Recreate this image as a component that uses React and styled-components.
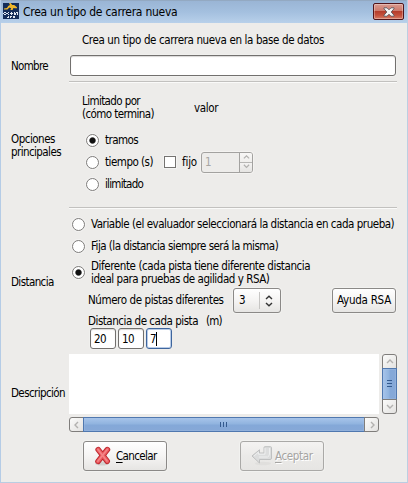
import React from "react";
import styled, { createGlobalStyle, css } from "styled-components";

const GlobalStyle = createGlobalStyle`
  body { margin: 0; }
  * { box-sizing: border-box; }
  svg { display: block; flex: none; }
`;

const Dialog = styled.main`
  width: 408px;
  height: 483px;
  display: flex;
  flex-direction: column;
  background: #edecea;
  border: solid #b5cce6;
  border-width: 0 1px 1px;
  border-right-color: #bccfe2;
  border-bottom-color: #b9cde2;
  font: 11.5px/13px "DejaVu Sans Condensed", "DejaVu Sans", sans-serif;
  color: #000;
  overflow: hidden;
`;

const TitleBar = styled.header`
  height: 23px;
  margin: 0 -1px;
  flex: none;
  display: flex;
  align-items: flex-start;
  background: linear-gradient(#9ab5d5, #a4c0df 50%, #b8d0ea);
  border-top: 1px solid #93a9c2;
  border-radius: 2px 2px 0 0;
  padding: 2px 3px 0;
`;

const Title = styled.h1`
  flex: 1;
  margin: 2px 0 0 4px;
  font-size: 12px;
  line-height: 14px;
  font-weight: 400;
`;

const CloseButton = styled.button`
  width: 31px;
  height: 17px;
  margin-right: 1px;
  padding: 0;
  display: grid;
  place-items: center;
  border: 1px solid #51151a;
  border-radius: 2px;
  background: linear-gradient(#d99b90, #cd7a6c 45%, #b53e2d 50%, #c4503c 75%, #d67c65);
  box-shadow: inset 0 0 0 1px #ffffff50;
`;

const Text = styled.span`
  display: block;
  flex: none;
  white-space: pre;
  letter-spacing: ${(p) => p.$track ?? -0.5}px;
`;

const Section = styled.section`
  flex: none;
  height: ${(p) => p.$height}px;
  display: grid;
  grid-template-columns: 58px 328px;
  padding-left: 10px;
`;

const SideLabel = styled.div`
  padding-top: ${(p) => p.$top}px;
`;

const Panel = styled.div`
  display: flex;
  flex-direction: column;
`;

const Row = styled.div`
  display: flex;
  flex: none;
  align-items: center;
  height: ${(p) => p.$height}px;
  padding-top: ${(p) => p.$top ?? 0}px;
  padding-left: ${(p) => p.$indent ?? 0}px;
  gap: ${(p) => p.$gap ?? 0}px;
`;

const Column = styled.div`
  flex: none;
  width: ${(p) => p.$width}px;
`;

const Rule = styled.hr`
  width: 328px;
  height: 2px;
  flex: none;
  margin: 0 0 0 68px;
  border: 0;
  background: linear-gradient(#c2c1bf 50%, #fafaf9 50%);
`;

const Radio = styled.span`
  width: 13px;
  height: 13px;
  flex: none;
  border: 1px solid #7e7c7a;
  border-radius: 50%;
  background: ${(p) =>
    p.$on ? "radial-gradient(circle at 50% 50%, #111 0 2.6px, #fff 3.7px)" : "#fff"};
  box-shadow: 0 0 0 1px #fafaf980;
`;

const Check = styled.span`
  width: 12px;
  height: 12px;
  flex: none;
  border: 1px solid #757371;
  background: #fff;
  box-shadow: 0 0 0 1px #fafaf980;
`;

const field = css`
  border: 1px solid #72706e;
  border-radius: 3px;
  background: #fff;
  box-shadow: inset 0 1px 1px #d9d8d6, 0 0 0 1px #f4f3f180;
`;

const NameField = styled.div`
  ${field}
  width: 326px;
  height: 21px;
  margin-left: 1px;
`;

const NumberField = styled.div`
  ${field}
  width: 26px;
  height: 21px;
  display: flex;
  align-items: center;
  padding: 1px 0 0 3px;
  ${(p) => p.$focused && css`border-color: #3e659d; box-shadow: inset 0 0 0 1px #b8cce8;`}
`;

const Caret = styled.i`
  width: 1px;
  height: 14px;
  background: #000;
`;

const Spin = styled.div`
  width: 52px;
  height: 21px;
  display: grid;
  grid-template-columns: 1fr 12px;
  border: 1px solid #a3a2a0;
  border-radius: 3px;
  color: #a7a6a4;
  box-shadow: 0 0 0 1px #f8f7f6a0;
`;

const SpinValue = styled.div`
  border-right: 1px solid #a3a2a0;
  padding: 3px 0 0 3px;
`;

const SpinArrows = styled.div`
  display: grid;
  grid-template-rows: 1fr 1fr;
  place-items: center;
  border-radius: 0 2px 2px 0;
  background: linear-gradient(#f8f7f6, #f0efed 47%, #b7b6b4 48%, #b7b6b4 52%, #f4f3f2 53%, #e5e4e2);
`;

const raised = css`
  border: 1px solid #8b8987;
  border-radius: 3px;
  background: linear-gradient(#fff, #f5f4f3 50%, #e6e5e3);
  box-shadow: 0 0 0 1px #f8f7f680;
`;

const Combo = styled.div`
  ${raised}
  width: 48px;
  height: 25px;
  margin-right: 51px;
  display: flex;
  align-items: center;
  padding-left: 5px;
`;

const ComboDivider = styled.i`
  width: 1px;
  height: 17px;
  margin: 0 5px 0 14px;
  background: #c6c5c3;
`;

const Button = styled.button`
  ${raised}
  width: ${(p) => p.$width}px;
  height: ${(p) => p.$height}px;
  display: flex;
  align-items: center;
  justify-content: ${(p) => (p.$icon ? "flex-start" : "center")};
  padding: 0 0 0 ${(p) => (p.$icon ? 10 : 0)}px;
  gap: ${(p) => (p.$icon ? 4 : 0)}px;
  font: inherit;
  color: #000;
  ${(p) =>
    p.disabled &&
    css`
      gap: 2px;
      color: #a5a4a2;
      text-shadow: 1px 1px #fff;
      border-color: #aaa9a7;
      background: linear-gradient(#f4f3f2, #ebeae8 50%, #e6e5e3);
    `}
`;

const Mnemonic = styled.span`
  text-decoration: underline;
  text-underline-offset: 2px;
  text-decoration-thickness: 1px;
`;

const Description = styled.div`
  display: grid;
  grid-template: 60px 15px / 310px 15px;
  gap: 3px;
`;

const TextArea = styled.div`
  background: #fff;
`;

const ScrollBar = styled.div`
  display: grid;
  ${(p) =>
    p.$vertical
      ? css`grid-template: 15px 1fr 15px / 15px;`
      : css`grid-template: 15px / 15px 1fr 15px;`}
`;

const ScrollStep = styled.div`
  display: grid;
  place-items: center;
  border: 1px solid #7f7d7b;
  border-radius: ${(p) => p.$radius};
  background: linear-gradient(135deg, #fbfbfa, #e3e2e0);
`;

const Thumb = styled.div`
  display: grid;
  place-items: center;
  border: 1px solid #5078af;
  margin: ${(p) => (p.$vertical ? "-1px 0" : "0 -1px")};
  background: linear-gradient(${(p) => (p.$vertical ? "90deg" : "180deg")}, #a7c4ea, #91b4df 45%, #84a8d8 55%, #86a8d7);
  box-shadow: inset 0 0 0 1px #a8c3e750;
`;

const Actions = styled.footer`
  display: flex;
  gap: 73px;
  padding: 8px 0 0 82px;
`;

const arrowPaths = {
  up: "M1 5 L4 2 L7 5",
  down: "M1 2 L4 5 L7 2",
  left: "M5 1 L2 4 L5 7",
  right: "M3 1 L6 4 L3 7",
};

function Arrow({ dir, size = 8, color = "#b2b1af", weight = 1.4 }) {
  return (
    <svg width={size} height={size} viewBox="0 0 8 8" fill="none">
      <path d={arrowPaths[dir]} stroke={color} strokeWidth={weight} />
    </svg>
  );
}

function Grip({ vertical }) {
  return (
    <svg width="8" height="8" stroke="#345a8e" strokeWidth="1">
      <path d={vertical ? "M1 .5H6M1 3.5H6M1 6.5H6" : "M.5 1V6M3.5 1V6M6.5 1V6"} />
    </svg>
  );
}

function AppIcon() {
  return (
    <svg width="16" height="16" viewBox="0 0 16 16">
      <path fill="#142d58" d="M0 0h16v16H0z" />
      <path fill="#efb72b" d="M6 0h1.6l1.7 2h1.9L14 4.2V5.2h-2L10.4 5 9.6 7H7.4l.8-1.8L6.4 4.6 4.4 6.4H1v-.8l3-.6 1.2-2L7 2z" />
      <path
        fill="none"
        stroke="#e2e9f1"
        d="M1 9.5h2m2 0h1m2 0h1m2 0h1m1 0h2M0 10.5h1m2 0h2m2 0h3m1 0h2m1 0h1M1 11.5h2m2 0h1m2 0h1m2 0h2m1 0h1M5 13.5h1m1 0h2m1 0h2M4 14.5h2m1 0h1m2 0h2"
      />
    </svg>
  );
}

function CloseIcon() {
  return (
    <svg width="12" height="10" viewBox="0 0 12 10">
      <path
        d="M1 .8h3l2 2 2-2h3v1L8.2 5 11 8.2v1H8l-2-2-2 2H1v-1L3.8 5 1 1.8z"
        fill="#f4f4f4"
        stroke="#5d565c"
        strokeWidth=".9"
      />
    </svg>
  );
}

function CancelIcon() {
  return (
    <svg width="18" height="20" viewBox="0 0 18 20" strokeLinecap="round" fill="none">
      <ellipse cx="8" cy="17.5" rx="7" ry="2" fill="#d2d1cf" />
      <path d="M4.2 3.6L13.2 15.2M13.4 3.6L4 15.4" stroke="#bc262d" strokeWidth="5.6" />
      <path d="M4.2 3.6L13.2 15.2M13.4 3.6L4 15.4" stroke="#ea5a5f" strokeWidth="3.8" />
      <path d="M4 3.4L13 15M13.2 3.4L3.8 15.2" stroke="#f48587" strokeWidth="1.6" />
    </svg>
  );
}

function AcceptIcon() {
  return (
    <svg width="22" height="20" viewBox="0 0 22 20">
      <ellipse cx="12" cy="17.5" rx="8" ry="1.7" fill="#e0dfdd" />
      <path
        d="M1 10L8.5 3.8V7H13V1.5q0-.8 1-.8h5.5q1 0 1 1V12q0 1.5-1.5 1.5H8.5V17z"
        fill="#dcdddd"
        stroke="#bfc0c0"
      />
      <path d="M3 10l4.4-3.8v2H14V2M18.5 2v6q0 2-2 3H8" stroke="#eeefef" fill="none" />
    </svg>
  );
}

export default function App() {
  return (
    <>
      <GlobalStyle />
      <Dialog>
        <TitleBar>
          <AppIcon />
          <Title><Text $track={-0.26}>Crea un tipo de carrera nueva</Text></Title>
          <CloseButton aria-label="Cerrar"><CloseIcon /></CloseButton>
        </TitleBar>

        <Section $height={58}>
          <SideLabel $top={37}><Text $track={-0.68}>Nombre</Text></SideLabel>
          <Panel>
            <Row $height={32} $top={2} $indent={13}>
              <Text $track={-0.37}>Crea un tipo de carrera nueva en la base de datos</Text>
            </Row>
            <NameField />
          </Panel>
        </Section>
        <Rule />

        <Section $height={124}>
          <SideLabel $top={50}>
            <Text>Opciones</Text>
            <Text $track={-0.58}>principales</Text>
          </SideLabel>
          <Panel>
            <Row $height={47} $top={3} $indent={13}>
              <Column $width={112}>
                <Text $track={-0.61}>Limitado por</Text>
                <Text $track={-0.58}>(cómo termina)</Text>
              </Column>
              <Text $track={-0.38}>valor</Text>
            </Row>
            <Row $height={21} $indent={17} $gap={6}><Radio $on /><Text $track={-0.57}>tramos</Text></Row>
            <Row $height={22} $indent={17} $gap={6}>
              <Radio />
              <Column $width={53}><Text>tiempo (s)</Text></Column>
              <Check />
              <Column $width={13}><Text $track={-0.18}>fijo</Text></Column>
              <Spin>
                <SpinValue>1</SpinValue>
                <SpinArrows>
                  <Arrow dir="up" size={7} />
                  <Arrow dir="down" size={7} />
                </SpinArrows>
              </Spin>
            </Row>
            <Row $height={22} $indent={17} $gap={6}><Radio /><Text $track={-0.76}>ilimitado</Text></Row>
          </Panel>
        </Section>
        <Rule />

        <Section $height={145}>
          <SideLabel $top={67}><Text $track={-0.6}>Distancia</Text></SideLabel>
          <Panel>
            <Row $height={4} />
            <Row $height={22} $indent={3} $gap={6}>
              <Radio />
              <Text $track={-0.46}>Variable (el evaluador seleccionará la distancia en cada prueba)</Text>
            </Row>
            <Row $height={22} $indent={3} $gap={6}>
              <Radio /><Text $track={-0.53}>Fija (la distancia siempre será la misma)</Text>
            </Row>
            <Row $height={31} $indent={3} $gap={6}>
              <Radio $on />
              <div>
                <Text $track={-0.41}>Diferente (cada pista tiene diferente distancia</Text>
                <Text $track={-0.46}>ideal para pruebas de agilidad y RSA)</Text>
              </div>
            </Row>
            <Row $height={25} $indent={19}>
              <Column $width={145}><Text $track={-0.41}>Número de pistas diferentes</Text></Column>
              <Combo>
                <Text>3</Text>
                <ComboDivider />
                <svg width="8" height="12" fill="none" stroke="#333" strokeWidth="1.4">
                  <path d="M1 4L4 1.2L7 4M1 8L4 10.8L7 8" />
                </svg>
              </Combo>
              <Button $width={64} $height={25}><Text $track={-0.25}>Ayuda RSA</Text></Button>
            </Row>
            <Row $height={15} $top={2} $indent={19}>
              <Column $width={118}><Text $track={-0.48}>Distancia de cada pista</Text></Column>
              <Text $track={-0.8}>(m)</Text>
            </Row>
            <Row $height={21} $indent={21} $gap={2}>
              <NumberField><Text>20</Text></NumberField>
              <NumberField><Text>10</Text></NumberField>
              <NumberField $focused><Text>7</Text><Caret /></NumberField>
            </Row>
          </Panel>
        </Section>

        <Section $height={79}>
          <SideLabel $top={33}><Text $track={-0.6}>Descripción</Text></SideLabel>
          <Description>
            <TextArea />
            <ScrollBar $vertical>
              <ScrollStep $radius="3px 3px 0 0"><Arrow dir="up" /></ScrollStep>
              <Thumb $vertical><Grip vertical /></Thumb>
              <ScrollStep $radius="0 0 3px 3px"><Arrow dir="down" /></ScrollStep>
            </ScrollBar>
            <ScrollBar>
              <ScrollStep $radius="3px 0 0 3px"><Arrow dir="left" /></ScrollStep>
              <Thumb><Grip /></Thumb>
              <ScrollStep $radius="0 3px 3px 0"><Arrow dir="right" /></ScrollStep>
            </ScrollBar>
          </Description>
        </Section>

        <Actions>
          <Button $width={84} $height={30} $icon>
            <CancelIcon /><Text $track={-0.62}><Mnemonic>C</Mnemonic>ancelar</Text>
          </Button>
          <Button $width={84} $height={30} $icon disabled>
            <AcceptIcon /><Text $track={-0.36}><Mnemonic>A</Mnemonic>ceptar</Text>
          </Button>
        </Actions>
      </Dialog>
    </>
  );
}
